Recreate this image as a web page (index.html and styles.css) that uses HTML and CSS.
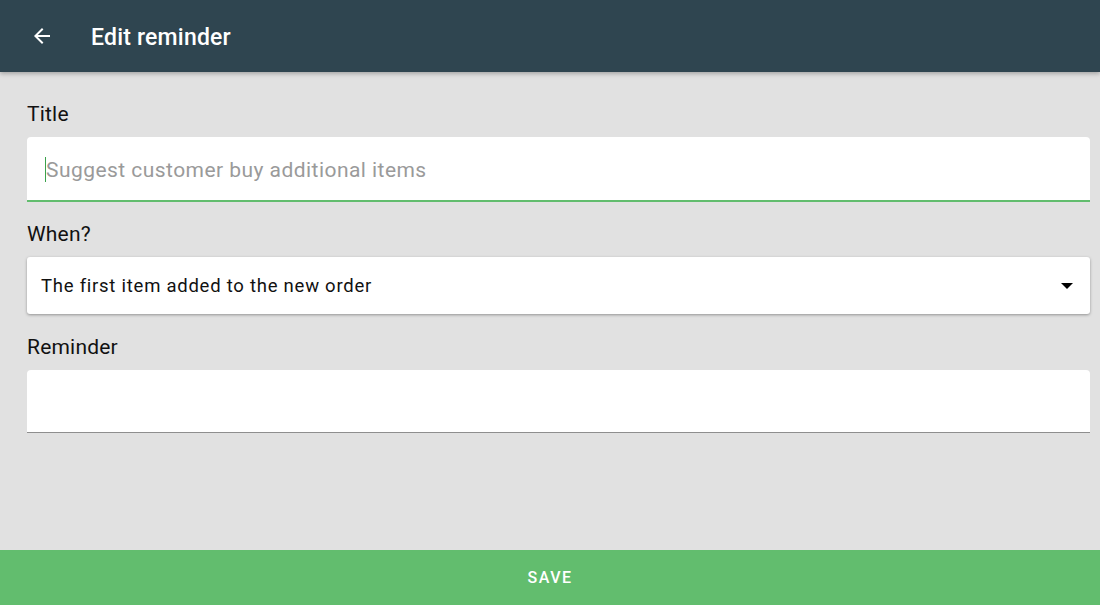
FILE: index.html
```html
<!DOCTYPE html>
<html lang="en">
<head>
<meta charset="utf-8">
<title>Edit reminder</title>
<link rel="stylesheet" href="styles.css">
</head>
<body>
<div class="app">
  <header class="toolbar">
    <button class="back" aria-label="Back">
      <svg width="24" height="24" viewBox="0 0 24 24"><path d="M20 11H7.83l5.59-5.59L12 4l-8 8 8 8 1.41-1.41L7.83 13H20v-2z" fill="#fff"/></svg>
    </button>
    <h1 class="toolbar-title">Edit reminder</h1>
  </header>

  <main class="form">
    <div class="field">
      <label class="field-label">Title</label>
      <div class="input input-focused">
        <span class="caret"></span><span class="placeholder">Suggest customer buy additional items</span>
      </div>
    </div>

    <div class="field">
      <label class="field-label">When?</label>
      <div class="select">
        <span class="select-value">The first item added to the new order</span>
        <svg class="select-arrow" width="12" height="6" viewBox="0 0 12 6"><path d="M0 0h12L6 6z" fill="#000"/></svg>
      </div>
    </div>

    <div class="field">
      <label class="field-label">Reminder</label>
      <div class="input input-plain"></div>
    </div>
  </main>

  <footer class="save-bar">
    <button class="save">SAVE</button>
  </footer>
</div>
</body>
</html>
```

FILE: styles.css
```css
* { box-sizing: border-box; }

html, body {
  margin: 0;
  height: 100%;
}

body {
  font-family: Roboto, "Noto Sans", sans-serif;
  background: #e1e1e1;
}

.app {
  display: flex;
  flex-direction: column;
  height: 605px;
}

.toolbar {
  height: 72px;
  flex: 0 0 72px;
  background: #2f4550;
  display: flex;
  align-items: center;
  padding-left: 30px;
  box-shadow: 0 2px 4px rgba(0, 0, 0, 0.25);
  position: relative;
  z-index: 1;
}

.back {
  background: none;
  border: 0;
  padding: 0;
  width: 24px;
  height: 24px;
  display: flex;
  cursor: pointer;
}

.toolbar-title {
  margin: 2px 0 0 37px;
  color: #fff;
  font-size: 23px;
  font-weight: 500;
  letter-spacing: 0.2px;
}

.form {
  flex: 1;
  padding: 30px 10px 0 27px;
  display: flex;
  flex-direction: column;
  gap: 20px;
}

.field {
  display: flex;
  flex-direction: column;
}

.field-label {
  font-size: 21px;
  line-height: 24px;
  color: #111;
  margin-bottom: 11px;
  letter-spacing: 0.2px;
}

.input {
  background: #fff;
  border-radius: 4px 4px 0 0;
  height: 65px;
  display: flex;
  align-items: center;
  padding-left: 18px;
}

.input-focused {
  border-bottom: 2px solid #62bd6e;
}

.input-plain {
  height: 63px;
  border-bottom: 1px solid #8e8e8e;
}

.caret {
  width: 1px;
  height: 25px;
  background: #3aa24b;
  margin-top: 2px;
}

.placeholder {
  font-size: 21px;
  color: #9a9a9a;
  letter-spacing: 0.45px;
  margin-top: 2px;
}

.select {
  background: #fff;
  height: 57px;
  margin-bottom: 1px;
  border-radius: 3px;
  box-shadow: 0 1px 3px rgba(0, 0, 0, 0.35);
  display: flex;
  align-items: center;
  justify-content: space-between;
  padding: 0 17px 0 14px;
}

.select-value {
  font-size: 18.5px;
  color: #111;
  letter-spacing: 0.75px;
  margin-top: 1px;
}

.select-arrow {
  margin-top: 1px;
}

.save-bar {
  height: 55px;
  flex: 0 0 55px;
  background: #62bd6e;
  display: flex;
}

.save {
  flex: 1;
  background: none;
  border: 0;
  color: #fff;
  font-family: Roboto, "Noto Sans", sans-serif;
  font-size: 16px;
  font-weight: 500;
  letter-spacing: 1.5px;
  cursor: pointer;
  padding-bottom: 1px;
}
```
